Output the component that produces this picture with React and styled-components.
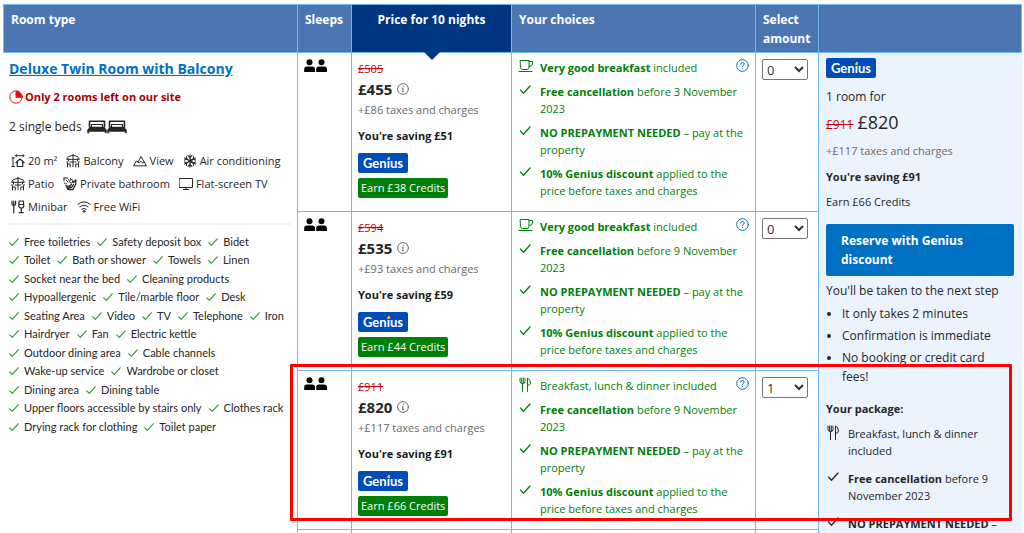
import React from "react";
import styled, { createGlobalStyle } from "styled-components";

const GlobalStyle = createGlobalStyle`
  * {
    box-sizing: border-box;
  }

  body {
    margin: 0;
    background: #fff;
    color: #262626;
    font-family: "Open Sans", "Noto Sans", sans-serif;
    font-size: 11px;
    line-height: 17px;
  }
`;

const Page = styled.main`
  position: relative;
  height: 100vh;
  padding: 4px 2px 0 3px;
  overflow: hidden;
`;

const Table = styled.table`
  width: 100%;
  table-layout: fixed;
  border-collapse: collapse;
`;

const Col = styled.col`
  width: ${props => props.$width};
`;

const HeadCell = styled.th`
  position: relative;
  padding: 5px 7px 4px;
  border: 1px solid #6cb9f5;
  background: ${props => (props.$active ? "#003580" : "#4c76b2")};
  color: #fff;
  font-size: 12px;
  line-height: 19px;
  font-weight: 700;
  text-align: ${props => (props.$active ? "center" : "left")};
  vertical-align: top;

  &::after {
    content: "";
    display: ${props => (props.$active ? "block" : "none")};
    position: absolute;
    top: 100%;
    left: 50%;
    margin-left: -8px;
    border: 8px solid transparent;
    border-top-color: #003580;
    border-bottom: 0;
  }
`;

const Cell = styled.td`
  padding: 6px 6px 12px;
  border: 1px solid #6cb9f5;
  vertical-align: top;
`;

const RoomCell = styled(Cell)`
  padding: 6px 6px 0 5px;
  border-left-color: #fff;
`;

const PriceCell = styled(Cell)`
  padding: 7px 6px 11px;
`;

const SummaryCell = styled(Cell)`
  padding: 5px 7px 0;
  border-right-color: #ebf3ff;
  background: #ebf3ff;
`;

const RoomLink = styled.a`
  display: block;
  color: #0071c2;
  font-size: 14px;
  line-height: 20px;
  font-weight: 700;
`;

const Scarcity = styled.div`
  display: flex;
  align-items: center;
  gap: 2px;
  margin-top: 9px;
  color: #a30000;
  font-weight: 700;
`;

const Beds = styled.div`
  display: flex;
  align-items: center;
  gap: 5px;
  margin-top: 12px;
  font-size: 12px;
  line-height: 20px;
`;

const Highlights = styled.div`
  margin-top: 12px;
  padding: 0 2px 5px;
  border-bottom: 2px solid #f2f2f2;
`;

const HighlightLine = styled.div`
  display: flex;
  align-items: center;
  gap: 9px;
  height: 23px;
`;

const Highlight = styled.span`
  display: flex;
  align-items: center;
  gap: 3px;
  white-space: nowrap;
`;

const Facilities = styled.div`
  margin-top: 8px;
  font-family: Lato, "Open Sans", sans-serif;
`;

const FacilityLine = styled.div`
  display: flex;
  gap: 7px;
  line-height: 18px;
  height: 18px;
  margin-bottom: ${props => (props.$loose ? "1px" : "0")};
`;

const Facility = styled.span`
  display: flex;
  align-items: center;
  gap: 5px;
  white-space: nowrap;
`;

const OldPrice = styled.span`
  color: #c00;
  font-size: ${props => (props.$large ? "12px" : "11px")};
  text-decoration: line-through;
`;

const Price = styled.div`
  display: flex;
  align-items: center;
  gap: 5px;
  font-size: 15px;
  line-height: 24px;
  font-weight: 700;
`;

const Muted = styled.div`
  color: #6b6b6b;
`;

const Saving = styled.div`
  margin: 9px 0;
  color: #1a1a1a;
  font-weight: 700;
`;

const GeniusBadge = styled.div`
  width: 50px;
  height: 20px;
  border-radius: 2px;
  background: #004cb8;
  color: #fff;
  font-family: Lato, sans-serif;
  font-size: 13px;
  line-height: 20px;
  font-weight: 700;
  text-align: center;
`;

const DottedI = styled.span`
  position: relative;

  &::after {
    content: "";
    position: absolute;
    top: 2px;
    left: 1px;
    width: 2px;
    height: 3px;
    background: #febb02;
  }
`;

const Credits = styled.div`
  width: fit-content;
  margin-top: 5px;
  padding: 0 3px;
  border-radius: 2px;
  background: #008009;
  color: #fff;
  line-height: 20px;
`;

const ChoiceList = styled.ul`
  display: flex;
  flex-direction: column;
  gap: ${props => (props.$summary ? "11px" : "7px")};
  margin: 0;
  padding: 0;
  list-style: none;
  color: ${props => (props.$summary ? "#262626" : "#008009")};
`;

const Choice = styled.li`
  display: flex;
  gap: 6px;

  svg {
    flex: none;
  }
`;

const HelpButton = styled.button`
  flex: none;
  width: 13px;
  height: 13px;
  margin-left: auto;
  padding: 0;
  border: 0;
  background: none;
  color: #0071c2;
  line-height: 0;
`;

const Amount = styled.select`
  display: block;
  width: 46px;
  height: 21px;
  border: 1px solid #767676;
  border-radius: 2px;
  background: #fff;
  color: #333;
  font-family: inherit;
  font-size: 13px;
`;

const RoomFor = styled.div`
  margin-top: 9px;
  font-size: 12px;
  line-height: 20px;
`;

const Total = styled.div`
  display: flex;
  align-items: baseline;
  gap: 4px;
  height: 24px;
  margin-top: 3px;
  line-height: 24px;
`;

const TotalPrice = styled.span`
  font-size: 18px;
`;

const SummaryLine = styled.div`
  margin-top: ${props => (props.$strong ? "9px" : "8px")};
  color: ${props => (props.$muted ? "#6b6b6b" : "#262626")};
  font-weight: ${props => (props.$strong ? 700 : 400)};
`;

const Reserve = styled.button`
  display: block;
  width: 100%;
  margin-top: 14px;
  padding: 7px 15px;
  border: 0;
  border-radius: 2px;
  background: #0071c2;
  color: #fff;
  font-family: inherit;
  font-size: 12px;
  line-height: 19px;
  font-weight: 700;
  text-align: left;
`;

const NextStep = styled.div`
  margin-top: 5px;
  font-size: 12px;
  line-height: 20px;
`;

const Perks = styled.ul`
  margin: 3px 0 0;
  padding-left: 16px;
  font-size: 12px;
  line-height: 19px;

  li {
    margin-bottom: 3px;
  }
`;

const PackageTitle = styled.div`
  margin: 14px 0 8px;
  font-weight: 700;
`;

const Highlighter = styled.div`
  position: absolute;
  top: 364px;
  left: 290px;
  right: 12px;
  height: 157px;
  border: 3px solid #f00;
  border-radius: 1px;
  pointer-events: none;
`;

const Drawing = ({ w = 14, h = 14, children, ...rest }) => (
  <svg
    width={w}
    height={h}
    viewBox={`0 0 ${w} ${h}`}
    fill="none"
    stroke="currentColor"
    strokeLinecap="round"
    strokeLinejoin="round"
    aria-hidden="true"
    {...rest}
  >
    {children}
  </svg>
);

const Check = () => (
  <Drawing w={16} h={14} strokeWidth="1.3">
    <path d="M2.5 7L5.5 10.2L12 3" />
  </Drawing>
);

const SmallCheck = () => (
  <Drawing w={10} h={10} stroke="#2f9e3a" strokeWidth="1.2">
    <path d="M0.8 5.8L3.3 8.4L9.2 1.8" />
  </Drawing>
);

const Cup = () => (
  <Drawing w={16} h={14} strokeWidth="1">
    <path d="M2.5 1.5H11V8.5Q11 10.5 9 10.5H4.5Q2.5 10.5 2.5 8.5Z" />
    <path d="M11 2.5H14.5V5Q14.5 7.5 11 7.5M1 12.5H14" />
  </Drawing>
);

const Cutlery = () => (
  <Drawing w={16} h={16} strokeWidth="1">
    <path d="M2 1V4.5Q2 6.5 4.5 6.5Q7 6.5 7 4.5V1M3.7 1V6M5.3 1V6M4.5 6.5V14.5" />
    <path d="M9.5 14.5V1Q12.5 2 12.5 6Q12.5 8.5 9.5 8.5" />
  </Drawing>
);

const Help = () => (
  <Drawing w={13} h={13} strokeWidth="1">
    <circle cx="6.5" cy="6.5" r="5.8" />
    <path d="M4.8 5.2Q4.8 3.5 6.5 3.5Q8.2 3.5 8.2 5Q8.2 5.9 7.2 6.4Q6.5 6.8 6.5 7.6M6.5 9.2V9.5" />
  </Drawing>
);

const Info = () => (
  <Drawing w={12} h={12} stroke="#6b6b6b" strokeWidth="1">
    <circle cx="6" cy="6" r="5.4" />
    <path d="M5.2 5.1H6.2L5.5 8.6H6.6M6.5 3V3.3" />
  </Drawing>
);

const People = () => (
  <Drawing w={24} h={14} fill="#000" stroke="none">
    {[0, 12].map(x => (
      <g key={x} transform={`translate(${x} 0)`}>
        <circle cx="5.5" cy="3.2" r="3" />
        <path d="M0.2 13V10Q0.2 7.5 3 7.5H8Q11 7.5 11 10V13Z" />
      </g>
    ))}
  </Drawing>
);

const Clock = () => (
  <Drawing w={14} h={14} stroke="#e21111" strokeWidth="1">
    <circle cx="7" cy="7" r="6.2" />
    <path d="M7 7V1.2A5.8 5.8 0 0 1 12.8 7Z" fill="#e21111" />
  </Drawing>
);

const TwinBeds = () => (
  <Drawing w={40} h={14} stroke="#262626">
    {[0, 20].map(x => (
      <g key={x} transform={`translate(${x} 0)`}>
        <path d="M2.5 7V1.2H17.5V7" strokeWidth="1.6" />
        <path d="M4.5 6.5V4.5H15.5V6.5" strokeWidth="1.2" />
        <path d="M0.5 12.8V10L3 7H17L19.5 10V12.8H18V11.5H2V12.8Z" fill="#262626" strokeWidth="0.5" />
      </g>
    ))}
  </Drawing>
);

const AreaIcon = () => (
  <Drawing>
    <path d="M2 4V12M0.7 4H3.3M0.7 12.5H3.3M4.5 1.7H13M5.7 0.5L4.5 1.7L5.7 2.9M11.8 0.5L13 1.7L11.8 2.9" />
    <path d="M5 8.5L9 5L13 8.5M6.3 8V12.5H11.7V8" strokeWidth="1.2" />
  </Drawing>
);

const Parasol = () => (
  <Drawing>
    <path d="M0.8 5L2.2 2.7L7 1.2L11.8 2.7L13.2 5ZM7 0.3V12.5M2.5 5V7M11.5 5V7M4 8H10" />
    <path d="M1 7.5L1.5 10V13M1.5 10H4.2V13M13 7.5L12.5 10V13M12.5 10H9.8V13" />
  </Drawing>
);

const Mountain = () => (
  <Drawing>
    <path d="M0.8 11.5L3.5 7L5 8.2L8 2.5L13.2 11.5ZM5 8.2L6.3 8.8L8 7.2L9.5 8.8L11.5 8.5" />
  </Drawing>
);

const Snowflake = () => (
  <Drawing strokeWidth="1.1">
    {[0, 60, 120].map(angle => (
      <path
        key={angle}
        transform={`rotate(${angle} 7 7)`}
        d="M7 0.8V13.2M5 1.7L7 3.6L9 1.7M5 12.3L7 10.4L9 12.3M7 4.8L8.8 5.9"
      />
    ))}
  </Drawing>
);

const Shower = () => (
  <Drawing>
    <path d="M1 1H5M1 1V4M3 3L5 5M3 6.5V7M5.5 2.5V3M1.5 6V6.3M7.5 1.5V2" />
    <circle cx="8.3" cy="4.3" r="1.7" />
    <path d="M10.5 5.5L12.8 3V7L10 12.5H5L3 8.5L6 9.5L8.5 7.5M5 11L9 10M10.5 7.5L9 10" strokeWidth="1.3" />
  </Drawing>
);

const Screen = () => (
  <Drawing>
    <path d="M0.5 1.5H13.5V10.5H0.5ZM4.5 12.5H9.5M7 10.5V12.5" />
  </Drawing>
);

const Minibar = () => (
  <Drawing>
    <path d="M1 1V4Q1 5.5 2.8 5.5Q4.6 5.5 4.6 4V1M2.8 1V12.8" strokeWidth="1.2" />
    <path d="M8.2 1H12.3L12.8 5.5Q12.8 8 10.3 8Q7.7 8 7.7 5.5ZM7.9 4.5H12.6M10.3 8V12.5M8.2 12.6H12.3" strokeWidth="1.2" />
  </Drawing>
);

const Wifi = () => (
  <Drawing>
    <path d="M1 4.2Q7 -0.7 13 4.2M3 6.8Q7 3.4 11 6.8M4.8 9.2Q7 7.4 9.2 9.2" />
    <circle cx="7" cy="11.4" r="1" />
  </Drawing>
);

const highlights = [
  [
    [AreaIcon, "20 m²"],
    [Parasol, "Balcony"],
    [Mountain, "View"],
    [Snowflake, "Air conditioning"]
  ],
  [
    [Parasol, "Patio"],
    [Shower, "Private bathroom"],
    [Screen, "Flat-screen TV"]
  ],
  [
    [Minibar, "Minibar"],
    [Wifi, "Free WiFi"]
  ]
];

const facilities = [
  ["Free toiletries", "Safety deposit box", "Bidet"],
  ["Toilet", "Bath or shower", "Towels", "Linen"],
  ["Socket near the bed", "Cleaning products"],
  ["Hypoallergenic", "Tile/marble floor", "Desk"],
  ["Seating Area", "Video", "TV", "Telephone", "Iron"],
  ["Hairdryer", "Fan", "Electric kettle"],
  ["Outdoor dining area", "Cable channels"],
  ["Wake-up service", "Wardrobe or closet"],
  ["Dining area", "Dining table"],
  ["Upper floors accessible by stairs only", "Clothes rack"],
  ["Drying rack for clothing", "Toilet paper"]
];

const offers = [
  { old: 505, price: 455, tax: 86, saving: 51, credits: 38, until: 3, breakfast: true, amount: "0" },
  { old: 594, price: 535, tax: 93, saving: 59, credits: 44, until: 9, breakfast: true, amount: "0" },
  { old: 911, price: 820, tax: 117, saving: 91, credits: 66, until: 9, breakfast: false, amount: "1" }
];

const Genius = () => (
  <GeniusBadge>
    Gen<DottedI>i</DottedI>us
  </GeniusBadge>
);

const Room = () => (
  <RoomCell rowSpan={offers.length + 1}>
    <RoomLink href="#room">Deluxe Twin Room with Balcony</RoomLink>
    <Scarcity>
      <Clock />
      Only 2 rooms left on our site
    </Scarcity>
    <Beds>
      2 single beds <TwinBeds />
    </Beds>
    <Highlights>
      {highlights.map((line, i) => (
        <HighlightLine key={i}>
          {line.map(([Icon, label]) => (
            <Highlight key={label}>
              <Icon />
              {label}
            </Highlight>
          ))}
        </HighlightLine>
      ))}
    </Highlights>
    <Facilities>
      {facilities.map((line, i) => (
        <FacilityLine key={i} $loose={i % 2 === 1}>
          {line.map(label => (
            <Facility key={label}>
              <SmallCheck />
              {label}
            </Facility>
          ))}
        </FacilityLine>
      ))}
    </Facilities>
  </RoomCell>
);

const Summary = () => (
  <SummaryCell rowSpan={offers.length + 1}>
    <Genius />
    <RoomFor>1 room for</RoomFor>
    <Total>
      <OldPrice $large>£911</OldPrice>
      <TotalPrice>£820</TotalPrice>
    </Total>
    <SummaryLine $muted>+£117 taxes and charges</SummaryLine>
    <SummaryLine $strong>You're saving £91</SummaryLine>
    <SummaryLine>Earn £66 Credits</SummaryLine>
    <Reserve type="button">Reserve with Genius discount</Reserve>
    <NextStep>You'll be taken to the next step</NextStep>
    <Perks>
      <li>It only takes 2 minutes</li>
      <li>Confirmation is immediate</li>
      <li>No booking or credit card fees!</li>
    </Perks>
    <PackageTitle>Your package:</PackageTitle>
    <ChoiceList $summary>
      <Choice>
        <Cutlery />
        <span>Breakfast, lunch & dinner included</span>
      </Choice>
      <Choice>
        <Check />
        <span>
          <b>Free cancellation</b> before 9 November 2023
        </span>
      </Choice>
      <Choice>
        <Check />
        <span>
          <b>NO PREPAYMENT NEEDED</b> –
        </span>
      </Choice>
    </ChoiceList>
  </SummaryCell>
);

const Offer = ({ offer, first }) => (
  <tr>
    {first && <Room />}
    <Cell>
      <People />
    </Cell>
    <PriceCell>
      <div>
        <OldPrice>£{offer.old}</OldPrice>
      </div>
      <Price>
        £{offer.price} <Info />
      </Price>
      <Muted>+£{offer.tax} taxes and charges</Muted>
      <Saving>You're saving £{offer.saving}</Saving>
      <Genius />
      <Credits>Earn £{offer.credits} Credits</Credits>
    </PriceCell>
    <Cell>
      <ChoiceList>
        <Choice>
          {offer.breakfast ? <Cup /> : <Cutlery />}
          {offer.breakfast ? (
            <span>
              <b>Very good breakfast</b> included
            </span>
          ) : (
            <span>Breakfast, lunch & dinner included</span>
          )}
          <HelpButton type="button" aria-label="More about the meals">
            <Help />
          </HelpButton>
        </Choice>
        <Choice>
          <Check />
          <span>
            <b>Free cancellation</b> before {offer.until} November 2023
          </span>
        </Choice>
        <Choice>
          <Check />
          <span>
            <b>NO PREPAYMENT NEEDED</b> – pay at the property
          </span>
        </Choice>
        <Choice>
          <Check />
          <span>
            <b>10% Genius discount</b> applied to the price before taxes and charges
          </span>
        </Choice>
      </ChoiceList>
    </Cell>
    <Cell>
      <Amount defaultValue={offer.amount} aria-label="Select amount">
        <option>0</option>
        <option>1</option>
        <option>2</option>
      </Amount>
    </Cell>
    {first && <Summary />}
  </tr>
);

const App = () => (
  <Page>
    <GlobalStyle />
    <Table>
      <colgroup>
        <Col $width="294px" />
        <Col $width="54px" />
        <Col $width="160px" />
        <Col $width="auto" />
        <Col $width="63px" />
        <Col $width="203px" />
      </colgroup>
      <thead>
        <tr>
          <HeadCell>Room type</HeadCell>
          <HeadCell>Sleeps</HeadCell>
          <HeadCell $active>Price for 10 nights</HeadCell>
          <HeadCell>Your choices</HeadCell>
          <HeadCell>Select amount</HeadCell>
          <HeadCell />
        </tr>
      </thead>
      <tbody>
        {offers.map((offer, i) => (
          <Offer key={offer.price} offer={offer} first={i === 0} />
        ))}
        <tr>
          <Cell />
          <Cell />
          <Cell />
          <Cell />
        </tr>
      </tbody>
    </Table>
    <Highlighter />
  </Page>
);

export default App;
